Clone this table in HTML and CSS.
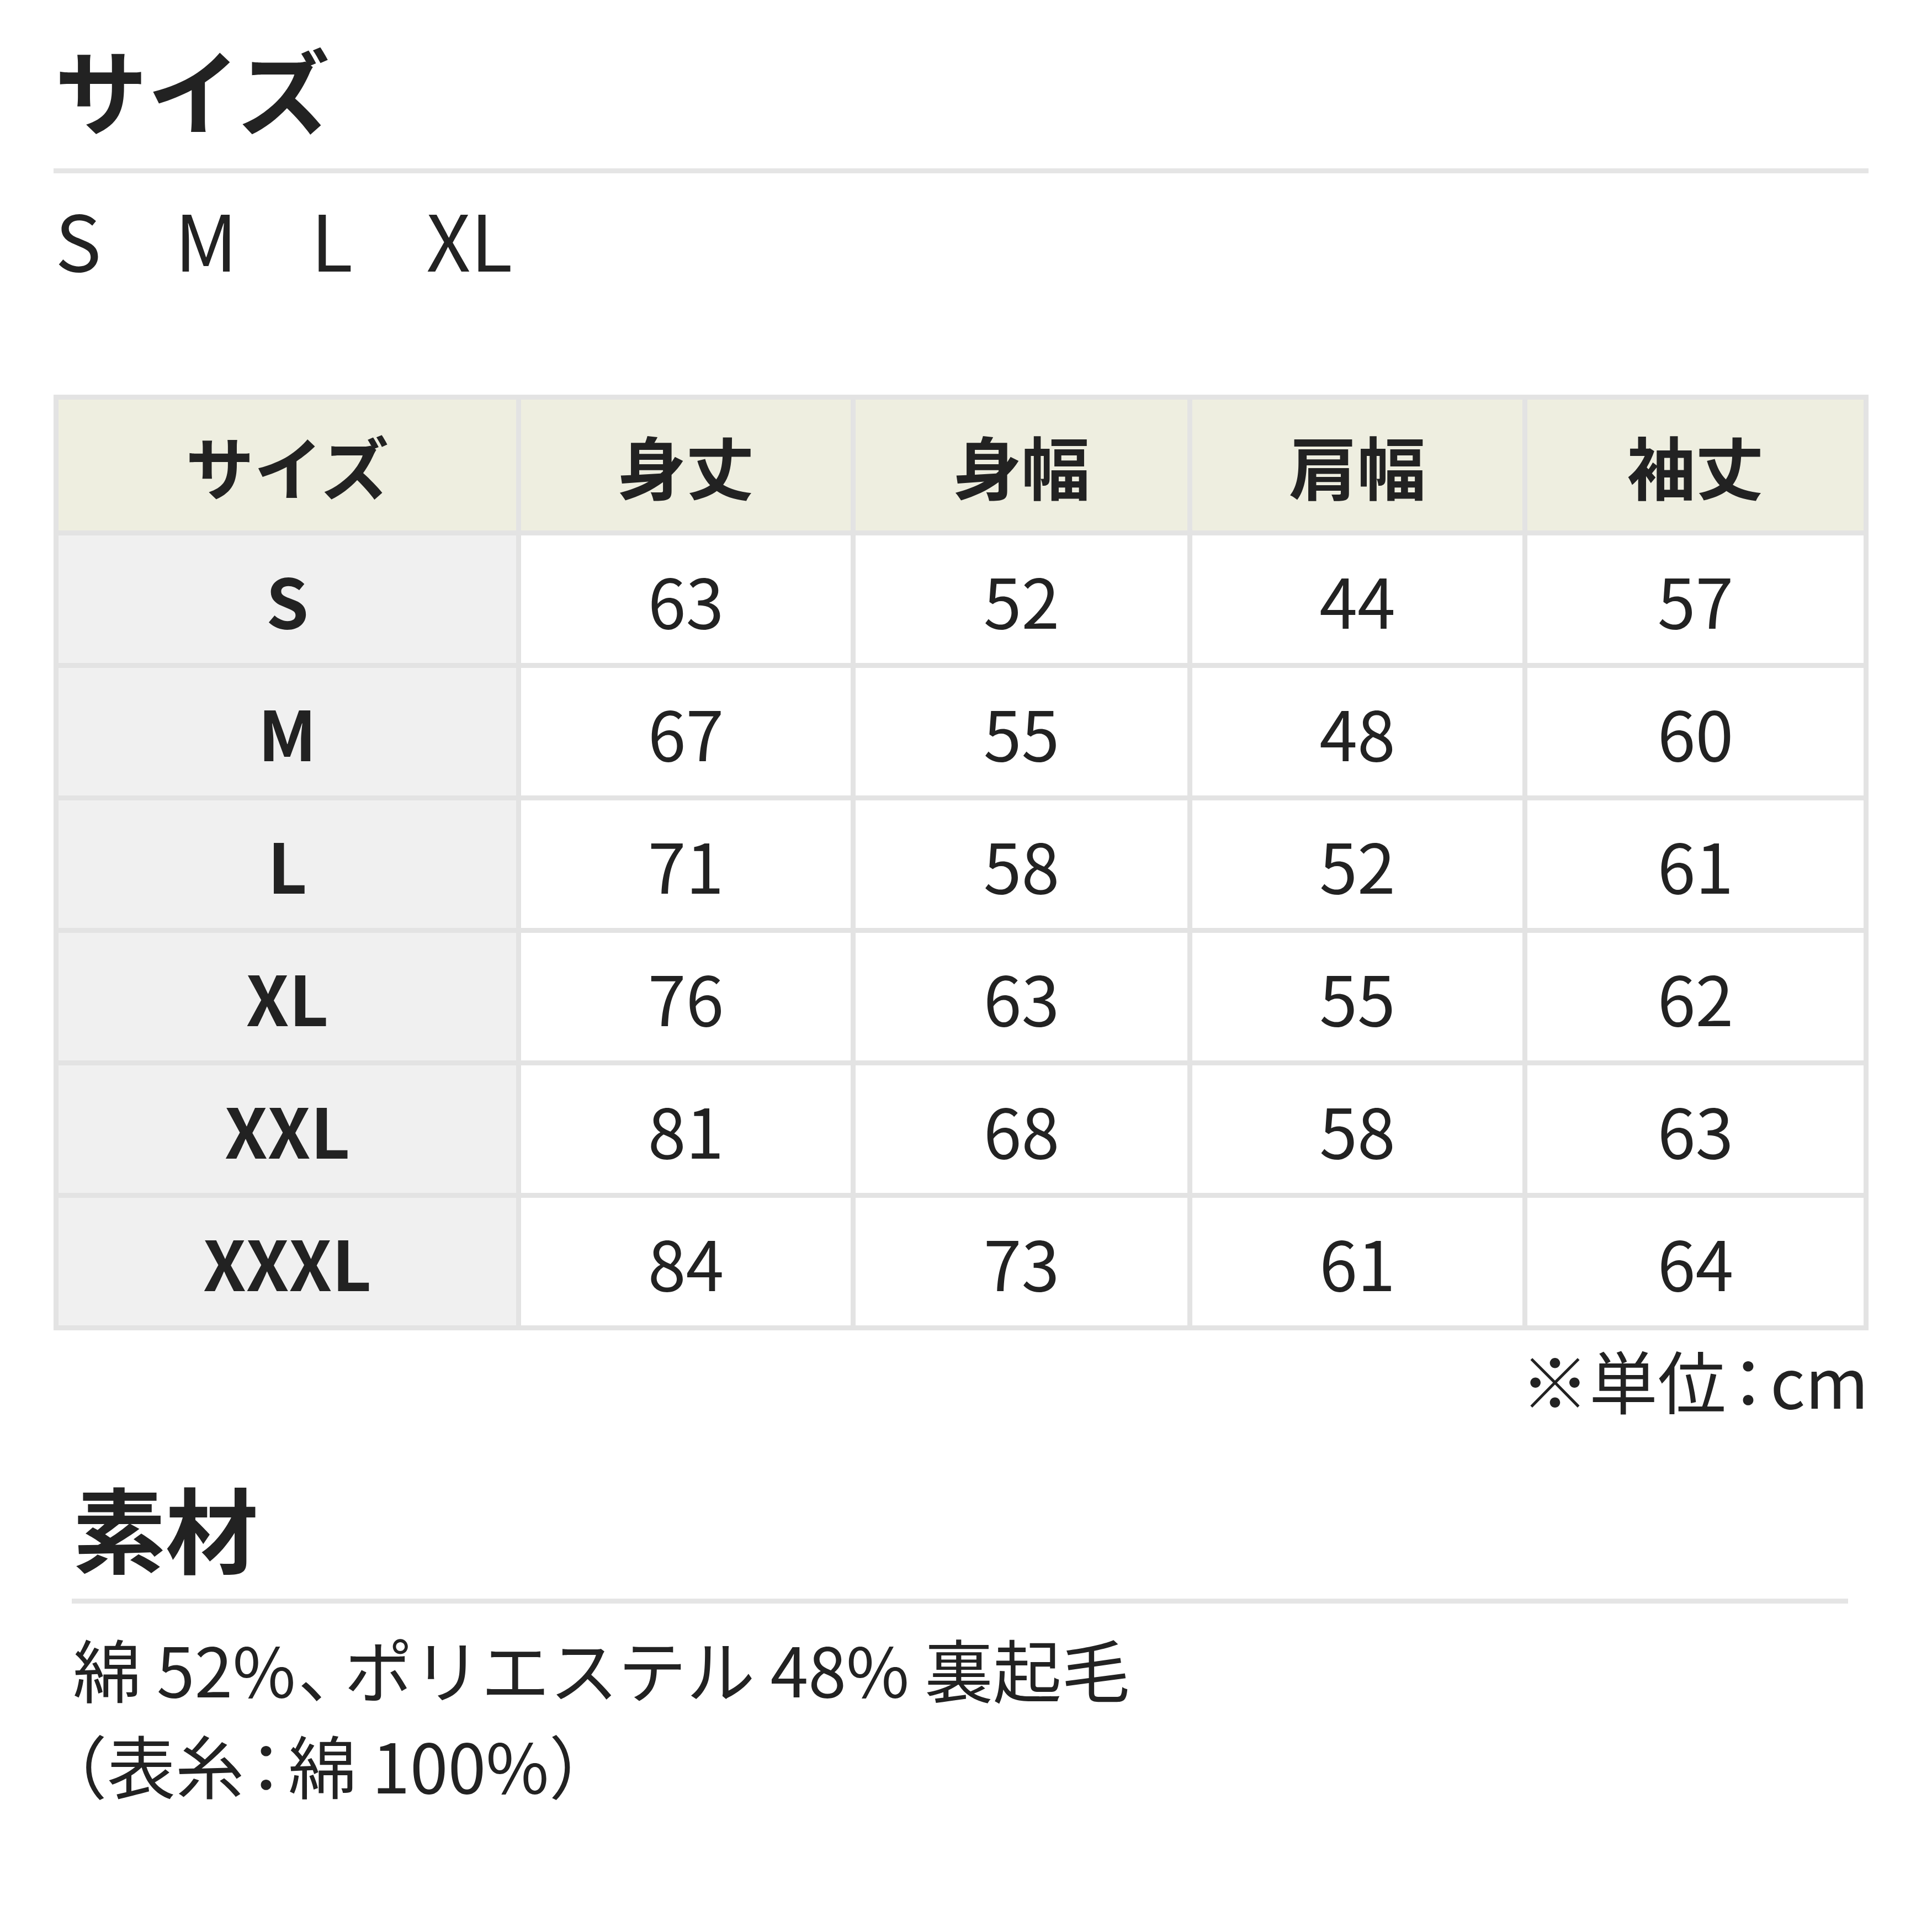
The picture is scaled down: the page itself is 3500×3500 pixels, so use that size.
FILE: index.html
```html
<!DOCTYPE html>
<html lang="ja">
<head>
<meta charset="utf-8">
<title>サイズ・素材</title>
<link rel="stylesheet" href="styles.css">
</head>
<body>
<div class="page">
  <section class="size-section">
    <h2 class="heading">サイズ</h2>
    <p class="size-list"><span>S</span><span>M</span><span>L</span><span>XL</span></p>
    <table class="size-table">
      <thead>
        <tr><th class="c1">サイズ</th><th class="c2">身丈</th><th class="c3">身幅</th><th class="c4">肩幅</th><th class="c5">袖丈</th></tr>
      </thead>
      <tbody>
        <tr><th>S</th><td>63</td><td>52</td><td>44</td><td>57</td></tr>
        <tr><th>M</th><td>67</td><td>55</td><td>48</td><td>60</td></tr>
        <tr><th>L</th><td>71</td><td>58</td><td>52</td><td>61</td></tr>
        <tr><th>XL</th><td>76</td><td>63</td><td>55</td><td>62</td></tr>
        <tr><th>XXL</th><td>81</td><td>68</td><td>58</td><td>63</td></tr>
        <tr><th>XXXL</th><td>84</td><td>73</td><td>61</td><td>64</td></tr>
      </tbody>
    </table>
    <p class="unit-note">※単位<span class="colon">：</span>cm</p>
  </section>
  <section class="material-section">
    <h2 class="heading heading-material">素材</h2>
    <p class="material-text">綿 52%<span class="comma">、</span>ポリエステル 48% 裏起毛<br>（表糸<span class="colon">：</span>綿 100%）</p>
  </section>
</div>
</body>
</html>
```

FILE: styles.css
```css
* { box-sizing: border-box; }
html, body { margin: 0; padding: 0; background: #fff; }
body {
  font-family: "Noto Sans CJK JP", "Noto Sans", sans-serif;
  color: #222;
  width: 3500px;
  height: 3500px;
}
.page { padding: 58px 115px 0 97px; }

.heading {
  margin: 0;
  font-size: 168px;
  line-height: 1.2;
  font-weight: 700;
  padding: 0 0 45px 2px;
  border-bottom: 9px solid #e5e5e5;
}
.heading-material { padding-bottom: 31px; }

.size-list {
  display: flex;
  gap: 133px;
  margin: 12px 0 0 3px;
  font-size: 140px;
  line-height: 1.5;
}

.size-table {
  width: 3288px;
  margin-top: 179px;
  border-collapse: separate;
  border-spacing: 0;
  table-layout: fixed;
  border-top: 9px solid #e3e3e3;
  border-left: 9px solid #e3e3e3;
  font-size: 124px;
  line-height: 1.2;
  color: #222;
}
.size-table th, .size-table td {
  border-right: 9px solid #e3e3e3;
  border-bottom: 9px solid #e3e3e3;
  text-align: center;
  vertical-align: middle;
  padding: 0;
}
.size-table thead th {
  background: #eeeee0;
  height: 246px;
  font-weight: 700;
}
.size-table tbody th {
  background: #f0f0f0;
  font-weight: 700;
}
.size-table td { font-weight: 400; background: #fff; }
.size-table tbody tr { height: 240px; }
.c1 { width: 838px; }
.c2 { width: 606px; }
.c3 { width: 610px; }
.c4 { width: 607px; }
.c5 { width: 618px; }

.unit-note {
  margin: -5px 0 0;
  font-size: 124px;
  line-height: 1.5;
  text-align: right;
  color: #222;
  font-feature-settings: "halt";
}
.colon { margin: 0 9px; }
.comma { margin: 0 22px 0 4px; }

.material-section { margin: 73px 37px 0 33px; }
.material-text {
  margin: 30px 0 0 2px;
  font-size: 124px;
  line-height: 1.4;
  color: #222;
  font-feature-settings: "halt";
}
```
